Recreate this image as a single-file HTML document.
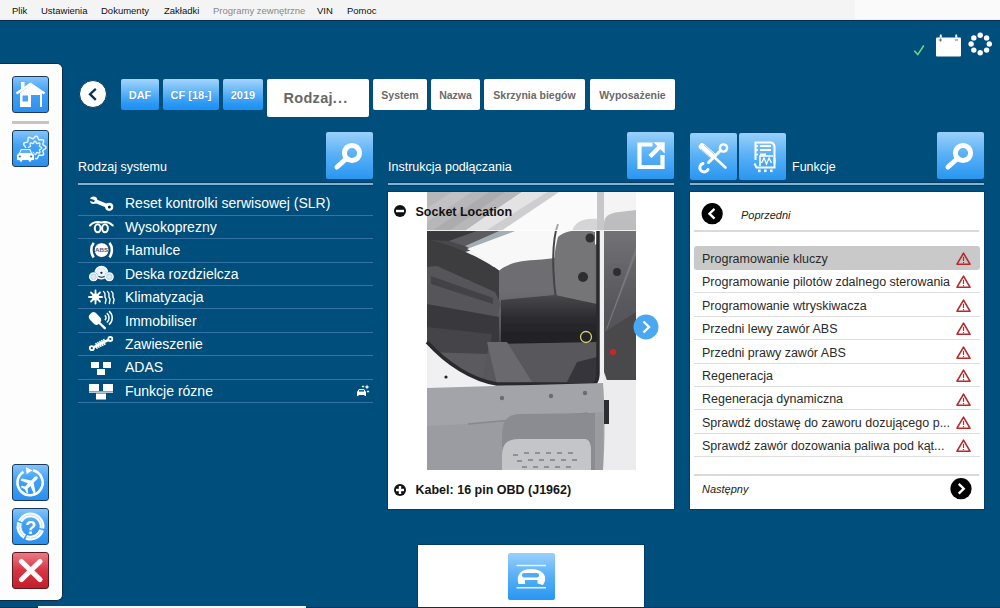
<!DOCTYPE html>
<html><head><meta charset="utf-8">
<style>
*{margin:0;padding:0;box-sizing:border-box}
html,body{width:1000px;height:608px;overflow:hidden;background:#004e7c;font-family:"Liberation Sans",sans-serif}
.a{position:absolute}
svg{position:absolute;overflow:visible}
#menu{left:0;top:0;width:1000px;height:21px;background:#f4f4f4;border-bottom:1px solid #0a2f50;box-shadow:inset 0 -1px 0 #e2f2fa}
#menu span{position:absolute;top:5px;font-size:9.5px;color:#111;white-space:nowrap}
#side{left:0;top:63px;width:63px;height:538px;background:#fdfdfd;border-radius:0 6px 6px 0;border:1px solid #0b2b48;border-left:none}
.sb{position:absolute;left:11.5px;width:37px;height:37px;border:1px solid #1c3c5e;border-radius:3px;background:linear-gradient(#84c4fa,#44a2f6 40%,#2a90ee)}
.sb.red{background:linear-gradient(#ea7a86,#d83444 50%,#c41e2c);border-color:#5a1a20}
.bc{position:absolute;top:79px;height:31px;border-radius:2px;background:linear-gradient(#a4d4fb,#64b6f8 40%,#2a98f4 80%,#1c90f2);color:#fff;font-weight:bold;font-size:11px;text-align:center;line-height:32px;text-shadow:0 0 1px rgba(0,40,90,0.4)}
.bw{position:absolute;top:79px;height:31px;border-radius:2px;background:#fff;color:#6a6a6a;font-weight:bold;font-size:10.5px;text-align:center;line-height:32px}
.hb{position:absolute;top:132px;width:47px;height:47px;border-radius:2px;background:linear-gradient(#9ad0fa,#5cb2f6 45%,#2896f2)}
.ht{position:absolute;top:159.5px;color:#fff;font-size:12.5px}
.hs{position:absolute;top:183px;height:2px;background:#80b2d4;box-shadow:0 -1px 0 #073e66,0 1px 0 #073e66}
.li{position:absolute;left:78px;width:295px;height:23.42px;border-bottom:1px solid #3572a6;color:#fff;font-size:14px}
.li span{position:absolute;left:47px;top:3.2px;white-space:nowrap}
.card{position:absolute;background:#fff;box-shadow:0 0 0 1px #063c64}
.fr{position:absolute;font-size:12.5px;color:#2a2a2a}
.fr span{position:absolute;left:12px;top:4px;white-space:nowrap}
</style></head><body>
<div id="menu" class="a">
<span style="left:12px">Plik</span>
<span style="left:41px">Ustawienia</span>
<span style="left:101px">Dokumenty</span>
<span style="left:164px">Zakładki</span>
<span style="left:213px;color:#888">Programy zewnętrzne</span>
<span style="left:317px">VIN</span>
<span style="left:347px">Pomoc</span>
<div style="position:absolute;left:855px;top:0;width:145px;height:19px;background:#fafafa"></div>
</div>

<!-- left sidebar -->
<div id="side" class="a">
<div class="sb" style="top:12px"><svg width="37" height="37" viewBox="0 0 37 37" style="left:-1px;top:-1px">
<g fill="none" stroke="#fff" stroke-width="2.6" stroke-linejoin="miter">
<path d="M4.5 17.5 L18.5 8 L32.5 17.5"/>
</g>
<rect x="9" y="6" width="3.5" height="8" fill="#fff"/>
<path d="M8 17 L8 31 L19 31 L19 19 L28 19 L28 31 L30 31 L30 16 L18.5 9 Z" fill="#fff"/>
<rect x="10.5" y="19.5" width="5.5" height="6" fill="#4aa6f4"/>
</svg></div>
<div style="position:absolute;left:12px;top:56.5px;width:37px;height:3.5px;background:#c4c4c4"></div>
<div class="sb" style="top:66px"><svg width="37" height="37" viewBox="0 0 37 37" style="left:-1px;top:-1px">
<path d="M34.00 17.50 L33.76 18.24 L33.11 18.90 L32.26 19.44 L31.46 19.90 L30.95 20.37 L30.81 20.94 L31.00 21.69 L31.33 22.60 L31.58 23.57 L31.55 24.44 L31.13 25.07 L30.36 25.36 L29.39 25.36 L28.41 25.20 L27.57 25.08 L26.95 25.21 L26.53 25.68 L26.21 26.46 L25.86 27.40 L25.38 28.24 L24.74 28.75 L23.99 28.80 L23.21 28.40 L22.50 27.70 L21.88 26.96 L21.33 26.42 L20.76 26.25 L20.10 26.46 L19.30 26.92 L18.41 27.38 L17.51 27.62 L16.75 27.46 L16.23 26.88 L15.99 25.99 L15.94 24.98 L15.94 24.06 L15.79 23.38 L15.36 22.98 L14.62 22.77 L13.67 22.60 L12.70 22.33 L11.97 21.86 L11.63 21.19 L11.76 20.38 L12.25 19.54 L12.88 18.77 L13.40 18.10 L13.60 17.50 L13.40 16.90 L12.88 16.23 L12.25 15.46 L11.76 14.62 L11.63 13.81 L11.97 13.14 L12.70 12.67 L13.67 12.40 L14.62 12.23 L15.36 12.02 L15.79 11.62 L15.94 10.94 L15.94 10.02 L15.99 9.01 L16.23 8.12 L16.75 7.54 L17.51 7.38 L18.41 7.62 L19.30 8.08 L20.10 8.54 L20.76 8.75 L21.33 8.58 L21.88 8.04 L22.50 7.30 L23.21 6.60 L23.99 6.20 L24.74 6.25 L25.38 6.76 L25.86 7.60 L26.21 8.54 L26.53 9.32 L26.95 9.79 L27.57 9.92 L28.41 9.80 L29.39 9.64 L30.36 9.64 L31.13 9.93 L31.55 10.56 L31.58 11.43 L31.33 12.40 L31.00 13.31 L30.81 14.06 L30.95 14.63 L31.46 15.10 L32.26 15.56 L33.11 16.10 L33.76 16.76 Z" fill="none" stroke="#e6f4ff" stroke-width="1.5"/>
<path d="M29.70 18.00 L29.57 18.43 L29.20 18.82 L28.69 19.13 L28.17 19.38 L27.75 19.61 L27.53 19.88 L27.50 20.22 L27.63 20.68 L27.82 21.22 L27.96 21.80 L27.95 22.34 L27.74 22.74 L27.34 22.95 L26.80 22.96 L26.22 22.82 L25.68 22.63 L25.22 22.50 L24.88 22.53 L24.61 22.75 L24.38 23.17 L24.13 23.69 L23.82 24.20 L23.43 24.57 L23.00 24.70 L22.57 24.57 L22.18 24.20 L21.87 23.69 L21.62 23.17 L21.39 22.75 L21.12 22.53 L20.78 22.50 L20.33 22.63 L19.78 22.82 L19.20 22.96 L18.66 22.95 L18.26 22.74 L18.05 22.34 L18.04 21.80 L18.18 21.22 L18.37 20.68 L18.50 20.22 L18.47 19.88 L18.25 19.61 L17.83 19.38 L17.31 19.13 L16.80 18.82 L16.43 18.43 L16.30 18.00 L16.43 17.57 L16.80 17.18 L17.31 16.87 L17.83 16.62 L18.25 16.39 L18.47 16.12 L18.50 15.78 L18.37 15.33 L18.18 14.78 L18.04 14.20 L18.05 13.66 L18.26 13.26 L18.66 13.05 L19.20 13.04 L19.78 13.18 L20.32 13.37 L20.78 13.50 L21.12 13.47 L21.39 13.25 L21.62 12.83 L21.87 12.31 L22.18 11.80 L22.57 11.43 L23.00 11.30 L23.43 11.43 L23.82 11.80 L24.13 12.31 L24.38 12.83 L24.61 13.25 L24.88 13.47 L25.22 13.50 L25.68 13.37 L26.22 13.18 L26.80 13.04 L27.34 13.05 L27.74 13.26 L27.95 13.66 L27.96 14.20 L27.82 14.78 L27.63 15.32 L27.50 15.78 L27.53 16.12 L27.75 16.39 L28.17 16.62 L28.69 16.87 L29.20 17.18 L29.57 17.57 Z" fill="none" stroke="#e6f4ff" stroke-width="1.4"/>
<path d="M4.5 30.5 L4.5 25 L6.5 23 L8.5 18.5 L18.5 18.5 L20.5 23 L22.5 25 L22.5 30.5 L19.5 30.5 L19.5 32 L16.5 32 L16.5 30.5 L10.5 30.5 L10.5 32 L7.5 32 L7.5 30.5 Z" fill="#fff" stroke="#3c9cf2" stroke-width="1"/>
<path d="M9.5 20 L17.5 20 L19 23 L8 23 Z" fill="#5aaef6"/>
<circle cx="7.8" cy="26.5" r="1.1" fill="#3d6d9a"/><circle cx="19.2" cy="26.5" r="1.1" fill="#3d6d9a"/>
</svg></div>
<div class="sb" style="top:400px"><svg width="37" height="37" viewBox="0 0 37 37" style="left:-1px;top:-1px">
<path d="M11.5 7.8 A12.6 12.6 0 1 0 21 6.3" fill="none" stroke="#fff" stroke-width="2.6"/>
<path d="M14 3.2 L20.5 6.3 L14.5 10.2 Z" fill="#fff"/>
<path transform="translate(18.6,19.4) rotate(-45)" d="M9.5 0 C9.5 -1.3 8.5 -1.7 6.5 -1.7 L2.5 -1.7 L-2.5 -9.5 L-5 -9.5 L-2 -1.7 L-6 -1.7 L-8 -4.5 L-9.5 -4.5 L-8.3 0 L-9.5 4.5 L-8 4.5 L-6 1.7 L-2 1.7 L-5 9.5 L-2.5 9.5 L2.5 1.7 L6.5 1.7 C8.5 1.7 9.5 1.3 9.5 0 Z" fill="#fff"/>
</svg></div>
<div class="sb" style="top:444px"><svg width="37" height="37" viewBox="0 0 37 37" style="left:-1px;top:-1px">
<circle cx="18.5" cy="18.5" r="11.6" fill="none" stroke="#fff" stroke-width="4.8" stroke-dasharray="17 1.6 19 1.6 16 1.6 17 1.6" transform="rotate(-75 18.5 18.5)"/>
<circle cx="18.5" cy="18.5" r="11.6" fill="none" stroke="#8ccaf8" stroke-width="0.6"/>
<text x="18.7" y="25.5" font-size="18" font-weight="bold" text-anchor="middle" fill="#fff" font-family="Liberation Sans">?</text>
</svg></div>
<div class="sb red" style="top:488px"><svg width="37" height="37" viewBox="0 0 37 37" style="left:-1px;top:-1px">
<path d="M9.5 9.5 L28 27.5 M28 9.5 L9.5 27.5" stroke="#fff" stroke-width="5.2" stroke-linecap="round"/>
</svg></div>
</div>

<!-- breadcrumb -->
<div class="a" style="left:79px;top:79.5px;width:28px;height:28px;border-radius:50%;background:#fff;border:1px solid #0a3a62"><svg width="28" height="28" style="left:-1px;top:-1px"><path d="M16.8 8.8 L11 14.2 L16.8 19.8" fill="none" stroke="#0c2f52" stroke-width="2.3"/></svg></div>
<div class="bc" style="left:121px;width:38px">DAF</div>
<div class="bc" style="left:163px;width:56px">CF [18-]</div>
<div class="bc" style="left:223px;width:40px">2019</div>
<div class="bw" style="left:267px;width:102px;height:38px;line-height:38px;font-size:14.5px;letter-spacing:0.3px;color:#686868;text-align:left;padding-left:16.5px">Rodzaj<span style="letter-spacing:1.2px">...</span></div>
<div class="bw" style="left:373px;width:54px">System</div>
<div class="bw" style="left:431px;width:49px">Nazwa</div>
<div class="bw" style="left:484px;width:101px">Skrzynia biegów</div>
<div class="bw" style="left:590px;width:85px">Wyposażenie</div>

<!-- top right -->
<svg width="100" height="40" style="left:900px;top:25px" viewBox="0 0 100 40">
<path d="M14.3 25.8 L17.8 29.6 L23.8 20.5" fill="none" stroke="#66dc86" stroke-width="1.5"/>
<rect x="36" y="12.5" width="25" height="19" rx="1" fill="#fff"/>
<path d="M39.5 12.5 L40 9.5 L41.5 9.5 L42 12.5 Z M55 12.5 L55.5 9.5 L57 9.5 L57.5 12.5 Z" fill="#fff"/>
<path d="M38.8 15 h3.2 M40.4 13.4 v3.2 M55 15 h3" stroke="#2a3a50" stroke-width="0.7"/>
<g fill="#fff"><circle cx="80.2" cy="10.3" r="2.7"/><circle cx="86.6" cy="12.9" r="2.7"/><circle cx="89.3" cy="19" r="2.7"/><circle cx="86.6" cy="25.1" r="2.7"/><circle cx="80.2" cy="27.7" r="2.7"/><circle cx="73.8" cy="25.1" r="2.7"/><circle cx="71.1" cy="19" r="2.7"/><circle cx="73.8" cy="12.9" r="2.7"/></g>
</svg>
<!-- headers -->
<div class="hb" style="left:326px"><svg width="47" height="47" viewBox="0 0 47 47">
<circle cx="26" cy="21" r="7.6" fill="none" stroke="#fff" stroke-width="5"/>
<path d="M20.5 26.5 L11 35" stroke="#fff" stroke-width="5" stroke-linecap="round"/>
</svg></div>
<div class="ht" style="left:78px">Rodzaj systemu</div>
<div class="hs" style="left:78px;width:295px"></div>

<div class="hb" style="left:627px"><svg width="47" height="47" viewBox="0 0 47 47">
<path d="M25.5 12.5 L12.5 12.5 L12.5 35 L35.5 35 L35.5 23" fill="none" stroke="#fff" stroke-width="4.2"/>
<path d="M23 24.5 L32.5 15" stroke="#fff" stroke-width="4.5"/>
<path d="M26.5 10.3 L37.7 10.3 L37.7 21.5 Z" fill="#fff"/>
</svg></div>
<div class="ht" style="left:388px">Instrukcja podłączania</div>
<div class="hs" style="left:388px;width:286px"></div>

<div class="hb" style="left:690px;top:133px"><svg width="47" height="47" viewBox="0 0 47 47">
<g stroke="#fff" fill="none" stroke-linecap="round">
<path d="M12 13.5 L23 23" stroke-width="6.5"/>
<path d="M23 23 L35.5 34.5" stroke-width="2.6"/>
<path d="M30.5 17.5 L18.5 29.5" stroke-width="3"/>
<circle cx="33.5" cy="15" r="3.6" stroke-width="2.4"/>
<path d="M18 36.5 A4.3 4.3 0 1 1 13 30.5" stroke-width="3"/>
</g>
<path d="M11 16 L21 25 M14 12 L24 21" stroke="#7cc0f8" stroke-width="0.8"/>

</svg></div>
<div class="hb" style="left:739px;top:133px"><svg width="47" height="47" viewBox="0 0 47 47">
<g stroke="#fff" fill="none" stroke-width="2">
<path d="M35.5 31 L35.5 14 C35.5 11 33.5 9.5 31 9.5 L16.5 9.5 L16.5 27"/>
<path d="M15.5 30.5 L17.5 34.5 L35.5 34.5 L35.5 25"/>
<path d="M21 13 h11 M21 17 h11 M21 21.5 h6"/>
<path d="M21 33 L21 23 L34 23" stroke-width="1.6"/>
<path d="M22.5 30 L25 25 L27.5 31 L30 25 L32.5 30" stroke-width="1.3"/>
</g>
<g fill="#fff"><circle cx="18" cy="13" r="1.1"/><circle cx="18" cy="17" r="1.1"/><circle cx="18" cy="21.5" r="1.1"/>
<rect x="19" y="36.5" width="2.6" height="2.6"/><rect x="25" y="36.5" width="2.6" height="2.6"/><rect x="31" y="36.5" width="2.6" height="2.6"/></g>
</svg></div>
<div class="ht" style="left:792px">Funkcje</div>
<div class="hb" style="left:937px"><svg width="47" height="47" viewBox="0 0 47 47">
<circle cx="26" cy="21" r="7.6" fill="none" stroke="#fff" stroke-width="5"/>
<path d="M20.5 26.5 L11 35" stroke="#fff" stroke-width="5" stroke-linecap="round"/>
</svg></div>
<div class="hs" style="left:690px;width:294px"></div>

<!-- list -->
<div class="li" style="top:192.30px"><span>Reset kontrolki serwisowej (SLR)</span></div>
<div class="li" style="top:215.72px"><span>Wysokoprezny</span></div>
<div class="li" style="top:239.14px"><span>Hamulce</span></div>
<div class="li" style="top:262.56px"><span>Deska rozdzielcza</span></div>
<div class="li" style="top:285.98px"><span>Klimatyzacja</span></div>
<div class="li" style="top:309.40px"><span>Immobiliser</span></div>
<div class="li" style="top:332.82px"><span>Zawieszenie</span></div>
<div class="li" style="top:356.24px"><span>ADAS</span></div>
<div class="li" style="top:379.66px"><span>Funkcje rózne</span></div>

<svg width="40" height="220" viewBox="0 0 40 220" style="left:84px;top:190px">
<!-- wrench -->
<path d="M10 10.5 L25.2 16.8" stroke="#fff" stroke-width="3.8" stroke-linecap="round"/>
<circle cx="25.2" cy="16.8" r="4.1" fill="#fff"/><circle cx="25.4" cy="17" r="1.5" fill="#0a2a40"/>
<circle cx="9.6" cy="10.3" r="3.7" fill="#fff"/>
<path d="M4.5 8.3 L10.6 10 L10.2 12.2 L4 10.6 Z" fill="#004e7c"/>
<!-- coil -->
<g fill="none" stroke="#fff" stroke-width="2">
<path d="M6 35.5 C9 32 14 31.5 17.3 32.5 C20.5 31.5 25.5 32 28.8 35.5" stroke-linecap="round"/>
<ellipse cx="13.7" cy="38.3" rx="2.9" ry="4"/>
<ellipse cx="21" cy="38.3" rx="2.9" ry="4"/>
</g>
<!-- ABS -->
<circle cx="17.6" cy="60.1" r="7.4" fill="#fff" stroke="#0a3050" stroke-width="0.8"/>
<text x="17.6" y="62.4" font-size="6.2" font-weight="bold" text-anchor="middle" fill="#4a5a70" font-family="Liberation Sans">ABS</text>
<path d="M9.8 52.8 C6.5 56.5 6.5 63.5 9.8 67.4 M25.4 52.8 C28.7 56.5 28.7 63.5 25.4 67.4" fill="none" stroke="#fff" stroke-width="2.6"/>
<!-- dashboard -->
<circle cx="17.4" cy="82.6" r="6.3" fill="#eaf6fd" stroke="#fff" stroke-width="1.3"/>
<circle cx="9.5" cy="86.8" r="4.6" fill="#004e7c"/><circle cx="9.5" cy="86.8" r="3.9" fill="#dcebf6" stroke="#fff" stroke-width="1.2"/>
<circle cx="25.3" cy="86.8" r="4.6" fill="#004e7c"/><circle cx="25.3" cy="86.8" r="3.9" fill="#dcebf6" stroke="#fff" stroke-width="1.2"/>
<circle cx="9.5" cy="86.8" r="2.6" fill="none" stroke="#b0c8dc" stroke-width="0.7"/>
<circle cx="25.3" cy="86.8" r="2.6" fill="none" stroke="#b0c8dc" stroke-width="0.7"/>
<circle cx="17.4" cy="82.6" r="4.5" fill="none" stroke="#c0d4e4" stroke-width="0.7" stroke-dasharray="1 1"/>
<circle cx="17.4" cy="82.8" r="1.1" fill="#0a2030"/>
<path d="M14.5 86.4 C16 87.6 19 87.6 20.5 86.4" stroke="#0a3050" stroke-width="1.1" fill="none"/>
<!-- climate -->
<g stroke="#fff" stroke-width="1.8" fill="none" stroke-linecap="round">
<path d="M11.5 100.5 v13 M5 107 h13 M7 102.5 l9 9 M16 102.5 l-9 9"/>
<path d="M19.5 101.5 C23 104 19.5 106 21.5 108 C23.5 110 20.5 112 21.5 113.5 M23.5 101.5 C27 104 23.5 106 25.5 108 C27.5 110 24.5 112 25.5 113.5 M27.5 101.5 C31 104 27.5 106 29.5 108 C31.5 110 28.5 112 29.5 113.5" stroke-width="1.4"/>
</g>
<circle cx="11.5" cy="107" r="3.6" fill="#fff"/>
<!-- immobiliser -->
<rect x="6.5" y="122" width="9" height="13" rx="4" fill="#fff" transform="rotate(-42 11 128.5)"/>
<path d="M15 132.5 L20.8 138.2" stroke="#fff" stroke-width="2.4" stroke-linecap="round"/>
<g fill="none" stroke="#fff" stroke-width="1.5">
<path d="M20.8 125.3 A3 3 0 0 1 20.8 130.1"/>
<path d="M22.8 123.1 A6 6 0 0 1 22.8 132.5"/>
<path d="M25 121.1 A8.8 8.8 0 0 1 25 134.7"/>
</g>
<!-- shock -->
<g stroke="#fff" fill="none">
<circle cx="7.8" cy="158.2" r="2" stroke-width="1.8"/><circle cx="26.3" cy="149" r="2" stroke-width="1.8"/>
<path d="M9.5 157.3 L24.5 149.9" stroke-width="2.6"/>
<path d="M11.89 152.78 L13.11 158.86 M13.84 151.81 L15.06 157.90 M15.79 150.85 L17.01 156.94 M17.74 149.89 L18.96 155.98 M19.69 148.93 L20.91 155.02" stroke-width="1.5"/>
</g>
<!-- ADAS -->
<g fill="#fff"><rect x="7" y="172" width="8" height="6"/><rect x="19" y="172" width="8" height="6"/><rect x="13" y="179" width="8" height="6"/></g>
<!-- network -->
<g fill="#fff"><rect x="5" y="194" width="10" height="7"/><rect x="19" y="194" width="10" height="7"/><rect x="5" y="201.5" width="24" height="1.2"/><rect x="12" y="203.5" width="10" height="6"/></g>
</svg>
<svg width="16" height="16" viewBox="0 0 16 16" style="left:355px;top:383px">
<path d="M2 13 L2 9 L4 6 L9 6 L11 9 L11 13 L9.5 13 L9.5 12 L3.5 12 L3.5 13 Z" fill="#fff"/>
<rect x="4" y="7" width="5" height="1.6" fill="#1e5a8c"/>
<path d="M12 1.5 L12.7 3.3 L14.5 4 L12.7 4.7 L12 6.5 L11.3 4.7 L9.5 4 L11.3 3.3 Z M8 2 L8.5 3 L9.5 3.5 L8.5 4 L8 5 L7.5 4 L6.5 3.5 L7.5 3Z" fill="#fff"/>
<path d="M13 7 l0.5 1 l1 .5 l-1 .5 l-.5 1 l-.5-1 l-1-.5 l1-.5z" fill="#fff"/>
</svg>
<!-- p_middle card -->
<div class="card" style="left:388px;top:192px;width:286px;height:317px;overflow:hidden">
<svg width="209" height="278" viewBox="0 0 209 278" style="left:39px;top:0px">
<defs>
<linearGradient id="gw" x1="0" y1="0" x2="1" y2="0"><stop offset="0" stop-color="#8c8c90"/><stop offset="0.5" stop-color="#e0e0e2"/><stop offset="1" stop-color="#f4f4f4"/></linearGradient>
<linearGradient id="gstep" x1="0" y1="0" x2="0" y2="1"><stop offset="0" stop-color="#a6a8ae"/><stop offset="1" stop-color="#96989f"/></linearGradient>
<linearGradient id="gdoor" x1="0" y1="0" x2="0" y2="1"><stop offset="0" stop-color="#7a7a7e"/><stop offset="0.5" stop-color="#5a5a5e"/><stop offset="1" stop-color="#4a4a4e"/></linearGradient>
<linearGradient id="gdash" x1="0" y1="0" x2="0" y2="1"><stop offset="0" stop-color="#707074"/><stop offset="0.6" stop-color="#5a5a5e"/><stop offset="1" stop-color="#3a3a3e"/></linearGradient>
<linearGradient id="gblk" x1="0" y1="0" x2="0" y2="1"><stop offset="0" stop-color="#48484c"/><stop offset="0.45" stop-color="#2a2a2e"/><stop offset="1" stop-color="#1c1c20"/></linearGradient>
<filter id="bl" x="-5%" y="-5%" width="110%" height="110%"><feGaussianBlur stdDeviation="0.6"/></filter>
</defs>
<g filter="url(#bl)">
<rect width="209" height="278" fill="#5a5a5e"/>
<!-- p_top area -->
<rect width="209" height="75" fill="#f4f4f4"/>
<path d="M0 0 L95 0 L38 39 L0 39 Z" fill="#6a6a6e"/>
<path d="M0 16 L25 0 L45 0 L0 30 Z" fill="#7e7e82"/>
<path d="M5 39 L62 0 L78 0 L22 39 Z" fill="#525256"/>
<path d="M38 39 L95 0 L120 0 L58 39 Z" fill="#c4c4c6"/>
<path d="M58 39 L120 0 L132 0 L74 39 Z" fill="#9a9a9e"/>
<path d="M170 0 L177 0 L177 39 L170 39 Z" fill="#8a8a8e"/>
<path d="M177 0 L209 0 L209 39 L177 39 Z" fill="#d4d4d6"/>
<path d="M186 0 L192 0 L192 39 L186 39 Z" fill="#b0b0b4"/>
<path d="M145 39 C148 30 156 26 170 27 L170 39 Z" fill="#a8a8ac"/>
<path d="M0 39 L88 39 L46 58 L30 62 L0 58 Z" fill="#4a4a4e"/>
<path d="M0 39 L50 39 L22 49 L0 48 Z" fill="#38383c"/>
<path d="M22 49 L50 39 L72 39 L38 54 Z" fill="#5c5c60"/>
<path d="M38 54 L72 39 L88 39 L46 58 Z" fill="#a4acb4"/>
<path d="M40 57 L88 39 L172 39 L172 50 C160 60 140 66 108 68 C90 69 80 72 72 79 C62 70 52 63 40 57 Z" fill="#f8f8f8"/>
<!-- p_seat backrest -->
<path d="M0 47.5 C25 52 55 66 74 80 L74 112 L0 112 Z" fill="#3c3c40"/>
<!-- p_dashboard -->
<path d="M72 79 C80 72 90 69 108 68 C140 66 160 60 172 50 L172 120 L72 130 Z" fill="#6e6e72"/>
<path d="M72 100 L133 95 L168 120 L168 160 L72 160 Z" fill="url(#gdash)"/>
<!-- p_armrest -->
<path d="M0 75 L10 74 L68 100 L74 112 L70 125 L0 112 Z" fill="#56565a"/>
<path d="M4 84 L66 106 L66 112 L4 92 Z" fill="#434347"/>
<!-- p_seat base -->
<path d="M0 112 L72 125 L72 155 L0 150 Z" fill="#38383c"/>
<path d="M0 135 L65 142 L62 162 L0 160 Z" fill="#444448"/>
<!-- p_steering column disc -->
<path d="M131 45 C138 37 160 37 168 40 L168 120 L138 122 C126 105 124 70 131 45 Z" fill="#747478"/>
<circle cx="163" cy="46" r="4.5" fill="#2e2e32"/><circle cx="156" cy="85" r="5" fill="#2e2e32"/>
<path d="M131 32 C124 50 124 100 136 138" fill="none" stroke="#444448" stroke-width="2"/>
<!-- p_under dash black -->
<path d="M74 108 L128 103 L170 112 L170 158 L74 158 Z" fill="url(#gblk)"/>
<!-- p_floor mat -->
<path d="M62 152 L170 150 L170 188 L55 192 Z" fill="#58585c"/>
<path d="M60 150 L80 150 L105 190 L70 192 Z" fill="#6a6a6e"/>
<path d="M150 170 L170 165 L170 190 L140 190 Z" fill="#36363a"/>
<!-- p_white body below opening -->
<path d="M0 150 C20 172 45 188 70 192 L165 192 C170 192 172 186 172 180 L172 39 L177 39 L177 200 L0 200 Z" fill="#f0f0f2"/>
<path d="M0 150 C20 172 45 188 70 192 L165 192 C170 192 171 186 171 180 L171 39" fill="none" stroke="#2a2a2e" stroke-width="3.5"/>
<circle cx="19" cy="185" r="1.6" fill="#222"/>
<!-- p_right door -->
<rect x="177" y="0" width="32" height="200" fill="#e8e8ea"/>
<path d="M177 32 C177 24 182 21 192 20 L209 18 L209 192 C200 192 185 192 180 188 L177 180 Z" fill="url(#gdoor)"/>
<path d="M209 55 L180 135 L179 140 L209 62 Z" fill="#7a7a7e"/>
<path d="M178 140 L209 120 L209 192 C200 192 185 192 180 188 L178 180 Z" fill="#48484c"/>
<circle cx="186" cy="160" r="3.2" fill="#c02a2a"/>
<circle cx="190" cy="80" r="4" fill="#2e2e32"/>
<!-- p_step panel -->
<rect x="176" y="188" width="33" height="90" fill="#ececee"/>
<path d="M0 196 L176 191 C178 215 178 250 176 278 L0 278 Z" fill="#a2a4aa"/>
<path d="M0 234 L41 232 L161 221 L176 220 L176 278 L0 278 Z" fill="#9a9ca2"/>
<path d="M41 232 L161 221" stroke="#86888e" stroke-width="1.5"/>
<circle cx="75" cy="206" r="2.2" fill="#6a6c72"/><circle cx="124" cy="204" r="2.2" fill="#6a6c72"/><circle cx="158" cy="201" r="2.2" fill="#6a6c72"/>
<!-- p_step recess -->
<path d="M75 246 C75 228 80 222 95 222 L168 221 L168 278 L75 278 Z" fill="#8a8c92"/>
<path d="M75 264 C75 252 80 247 92 247 L158 247 C162 247 164 252 164 258 L164 278 L75 278 Z" fill="#c4c5c9"/>
<g fill="#8e9096"><rect x="86" y="262" width="5" height="2"/><rect x="97" y="260" width="5" height="2"/><rect x="108" y="260" width="5" height="2"/><rect x="119" y="260" width="5" height="2"/><rect x="130" y="260" width="5" height="2"/><rect x="141" y="260" width="5" height="2"/><rect x="90" y="268" width="5" height="2"/><rect x="101" y="267" width="5" height="2"/><rect x="112" y="267" width="5" height="2"/><rect x="123" y="267" width="5" height="2"/><rect x="134" y="267" width="5" height="2"/><rect x="145" y="267" width="5" height="2"/><rect x="95" y="274" width="5" height="2"/><rect x="106" y="274" width="5" height="2"/><rect x="117" y="274" width="5" height="2"/><rect x="128" y="274" width="5" height="2"/><rect x="139" y="274" width="5" height="2"/></g>
<!-- p_hinge -->
<rect x="177" y="208" width="5" height="24" fill="#2e2e32"/>
</g>
<circle cx="159" cy="145" r="5.5" fill="none" stroke="#d8d070" stroke-width="1.3"/>
</svg>
<div style="position:absolute;left:0;top:0;width:286px;height:39px;background:rgba(255,255,255,0.52);border-bottom:1px solid rgba(255,255,255,0.75)"></div>
<svg width="14" height="14" style="left:5px;top:12px"><circle cx="7" cy="7" r="6" fill="#111"/><rect x="3" y="5.8" width="8" height="2.4" fill="#fff"/></svg>
<div style="position:absolute;left:27.5px;top:12.5px;font-size:12.5px;font-weight:bold;color:#111;white-space:nowrap">Socket Location</div>
<div style="position:absolute;left:0;top:278px;width:286px;height:39px;background:#fff"></div>
<svg width="14" height="14" style="left:5px;top:291px"><circle cx="7" cy="7" r="6" fill="#111"/><rect x="3" y="5.8" width="8" height="2.4" fill="#fff"/><rect x="5.8" y="3" width="2.4" height="8" fill="#fff"/></svg>
<div style="position:absolute;left:27.5px;top:290.5px;font-size:12.5px;font-weight:bold;color:#151515;white-space:nowrap">Kabel: 16 pin OBD (J1962)</div>
<svg width="26" height="26" style="left:245px;top:122px"><circle cx="13" cy="13" r="12.5" fill="#4aa8f2"/><path d="M10.5 7.5 L16 13 L10.5 18.5" fill="none" stroke="#fff" stroke-width="2.4"/></svg>
</div>
<!-- p_right card -->
<div class="card" style="left:690px;top:192px;width:294px;height:317px">
<svg width="22" height="22" style="left:11px;top:10.5px"><circle cx="11.2" cy="10.7" r="10.6" fill="#000"/><path d="M13.5 5.8 L8.4 10.7 L13.5 15.6" fill="none" stroke="#fff" stroke-width="2.3"/></svg>
<div style="position:absolute;left:51px;top:16.7px;font-size:11px;font-style:italic;color:#222">Poprzedni</div>
<div style="position:absolute;left:4px;top:38px;width:285px;height:1.5px;background:#dadada"></div>
<div class="fr" style="top:54.40px;left:4px;width:286px;height:23.44px;background:#c9c9c9;border-radius:3px;"><span style="left:8px;top:5.4px">Programowanie kluczy</span><svg width="17" height="15" viewBox="0 0 17 15" style="left:261px;top:4.5px"><path d="M8.5 2.2 L15 13.2 L2 13.2 Z" fill="none" stroke="#b52a2a" stroke-width="1.6" stroke-linejoin="round"/><rect x="7.9" y="5.8" width="1.2" height="4.2" fill="#b52a2a"/><rect x="7.9" y="11" width="1.2" height="1.2" fill="#b52a2a"/></svg></div>
<div class="fr" style="top:77.84px;left:4px;width:286px;height:23.44px;border-bottom:1px solid #dedede;"><span style="left:8px;top:5.4px">Programowanie pilotów zdalnego sterowania</span><svg width="17" height="15" viewBox="0 0 17 15" style="left:261px;top:4.5px"><path d="M8.5 2.2 L15 13.2 L2 13.2 Z" fill="none" stroke="#b52a2a" stroke-width="1.6" stroke-linejoin="round"/><rect x="7.9" y="5.8" width="1.2" height="4.2" fill="#b52a2a"/><rect x="7.9" y="11" width="1.2" height="1.2" fill="#b52a2a"/></svg></div>
<div class="fr" style="top:101.28px;left:4px;width:286px;height:23.44px;border-bottom:1px solid #dedede;"><span style="left:8px;top:5.4px">Programowanie wtryskiwacza</span><svg width="17" height="15" viewBox="0 0 17 15" style="left:261px;top:4.5px"><path d="M8.5 2.2 L15 13.2 L2 13.2 Z" fill="none" stroke="#b52a2a" stroke-width="1.6" stroke-linejoin="round"/><rect x="7.9" y="5.8" width="1.2" height="4.2" fill="#b52a2a"/><rect x="7.9" y="11" width="1.2" height="1.2" fill="#b52a2a"/></svg></div>
<div class="fr" style="top:124.72px;left:4px;width:286px;height:23.44px;border-bottom:1px solid #dedede;"><span style="left:8px;top:5.4px">Przedni lewy zawór ABS</span><svg width="17" height="15" viewBox="0 0 17 15" style="left:261px;top:4.5px"><path d="M8.5 2.2 L15 13.2 L2 13.2 Z" fill="none" stroke="#b52a2a" stroke-width="1.6" stroke-linejoin="round"/><rect x="7.9" y="5.8" width="1.2" height="4.2" fill="#b52a2a"/><rect x="7.9" y="11" width="1.2" height="1.2" fill="#b52a2a"/></svg></div>
<div class="fr" style="top:148.16px;left:4px;width:286px;height:23.44px;border-bottom:1px solid #dedede;"><span style="left:8px;top:5.4px">Przedni prawy zawór ABS</span><svg width="17" height="15" viewBox="0 0 17 15" style="left:261px;top:4.5px"><path d="M8.5 2.2 L15 13.2 L2 13.2 Z" fill="none" stroke="#b52a2a" stroke-width="1.6" stroke-linejoin="round"/><rect x="7.9" y="5.8" width="1.2" height="4.2" fill="#b52a2a"/><rect x="7.9" y="11" width="1.2" height="1.2" fill="#b52a2a"/></svg></div>
<div class="fr" style="top:171.60px;left:4px;width:286px;height:23.44px;border-bottom:1px solid #dedede;"><span style="left:8px;top:5.4px">Regeneracja</span><svg width="17" height="15" viewBox="0 0 17 15" style="left:261px;top:4.5px"><path d="M8.5 2.2 L15 13.2 L2 13.2 Z" fill="none" stroke="#b52a2a" stroke-width="1.6" stroke-linejoin="round"/><rect x="7.9" y="5.8" width="1.2" height="4.2" fill="#b52a2a"/><rect x="7.9" y="11" width="1.2" height="1.2" fill="#b52a2a"/></svg></div>
<div class="fr" style="top:195.04px;left:4px;width:286px;height:23.44px;border-bottom:1px solid #dedede;"><span style="left:8px;top:5.4px">Regeneracja dynamiczna</span><svg width="17" height="15" viewBox="0 0 17 15" style="left:261px;top:4.5px"><path d="M8.5 2.2 L15 13.2 L2 13.2 Z" fill="none" stroke="#b52a2a" stroke-width="1.6" stroke-linejoin="round"/><rect x="7.9" y="5.8" width="1.2" height="4.2" fill="#b52a2a"/><rect x="7.9" y="11" width="1.2" height="1.2" fill="#b52a2a"/></svg></div>
<div class="fr" style="top:218.48px;left:4px;width:286px;height:23.44px;border-bottom:1px solid #dedede;"><span style="left:8px;top:5.4px">Sprawdź dostawę do zaworu dozującego p...</span><svg width="17" height="15" viewBox="0 0 17 15" style="left:261px;top:4.5px"><path d="M8.5 2.2 L15 13.2 L2 13.2 Z" fill="none" stroke="#b52a2a" stroke-width="1.6" stroke-linejoin="round"/><rect x="7.9" y="5.8" width="1.2" height="4.2" fill="#b52a2a"/><rect x="7.9" y="11" width="1.2" height="1.2" fill="#b52a2a"/></svg></div>
<div class="fr" style="top:241.92px;left:4px;width:286px;height:23.44px;border-bottom:1px solid #dedede;"><span style="left:8px;top:5.4px">Sprawdź zawór dozowania paliwa pod kąt...</span><svg width="17" height="15" viewBox="0 0 17 15" style="left:261px;top:4.5px"><path d="M8.5 2.2 L15 13.2 L2 13.2 Z" fill="none" stroke="#b52a2a" stroke-width="1.6" stroke-linejoin="round"/><rect x="7.9" y="5.8" width="1.2" height="4.2" fill="#b52a2a"/><rect x="7.9" y="11" width="1.2" height="1.2" fill="#b52a2a"/></svg></div>
<div style="position:absolute;left:4px;top:282.3px;width:285px;height:1.5px;background:#dadada"></div>
<div style="position:absolute;left:12px;top:291px;font-size:11px;font-style:italic;color:#222">Następny</div>
<svg width="22" height="22" style="left:260px;top:286px"><circle cx="11" cy="10.7" r="10.6" fill="#000"/><path d="M8.7 5.8 L13.8 10.7 L8.7 15.6" fill="none" stroke="#fff" stroke-width="2.3"/></svg>
</div>
<!-- p_bottom card -->
<div class="card" style="left:418px;top:545px;width:226px;height:63px"></div>
<div class="hb" style="left:508px;top:553px"><svg width="47" height="47" viewBox="0 0 47 47">
<path d="M8.5 12.5 h29.5 M8.5 34.8 h29.5" stroke="#fff" stroke-width="1.6" opacity="0.85"/>
<path d="M10.5 31 C7.5 22 13 16 23 16 C33 16 38.5 21 37 28 L35 32 L29.5 30.5 L29.5 27 L17 27 L17 31 Z" fill="#fff"/>
<rect x="14" y="20" width="17" height="4.5" rx="2" fill="#52aaf4"/>
</svg></div>
<div class="a" style="left:0;top:606.5px;width:1000px;height:1.5px;background:#0c2c48"></div>
<div class="a" style="left:38px;top:606px;width:268px;height:2px;background:#f4f8fb"></div>
</body></html>
